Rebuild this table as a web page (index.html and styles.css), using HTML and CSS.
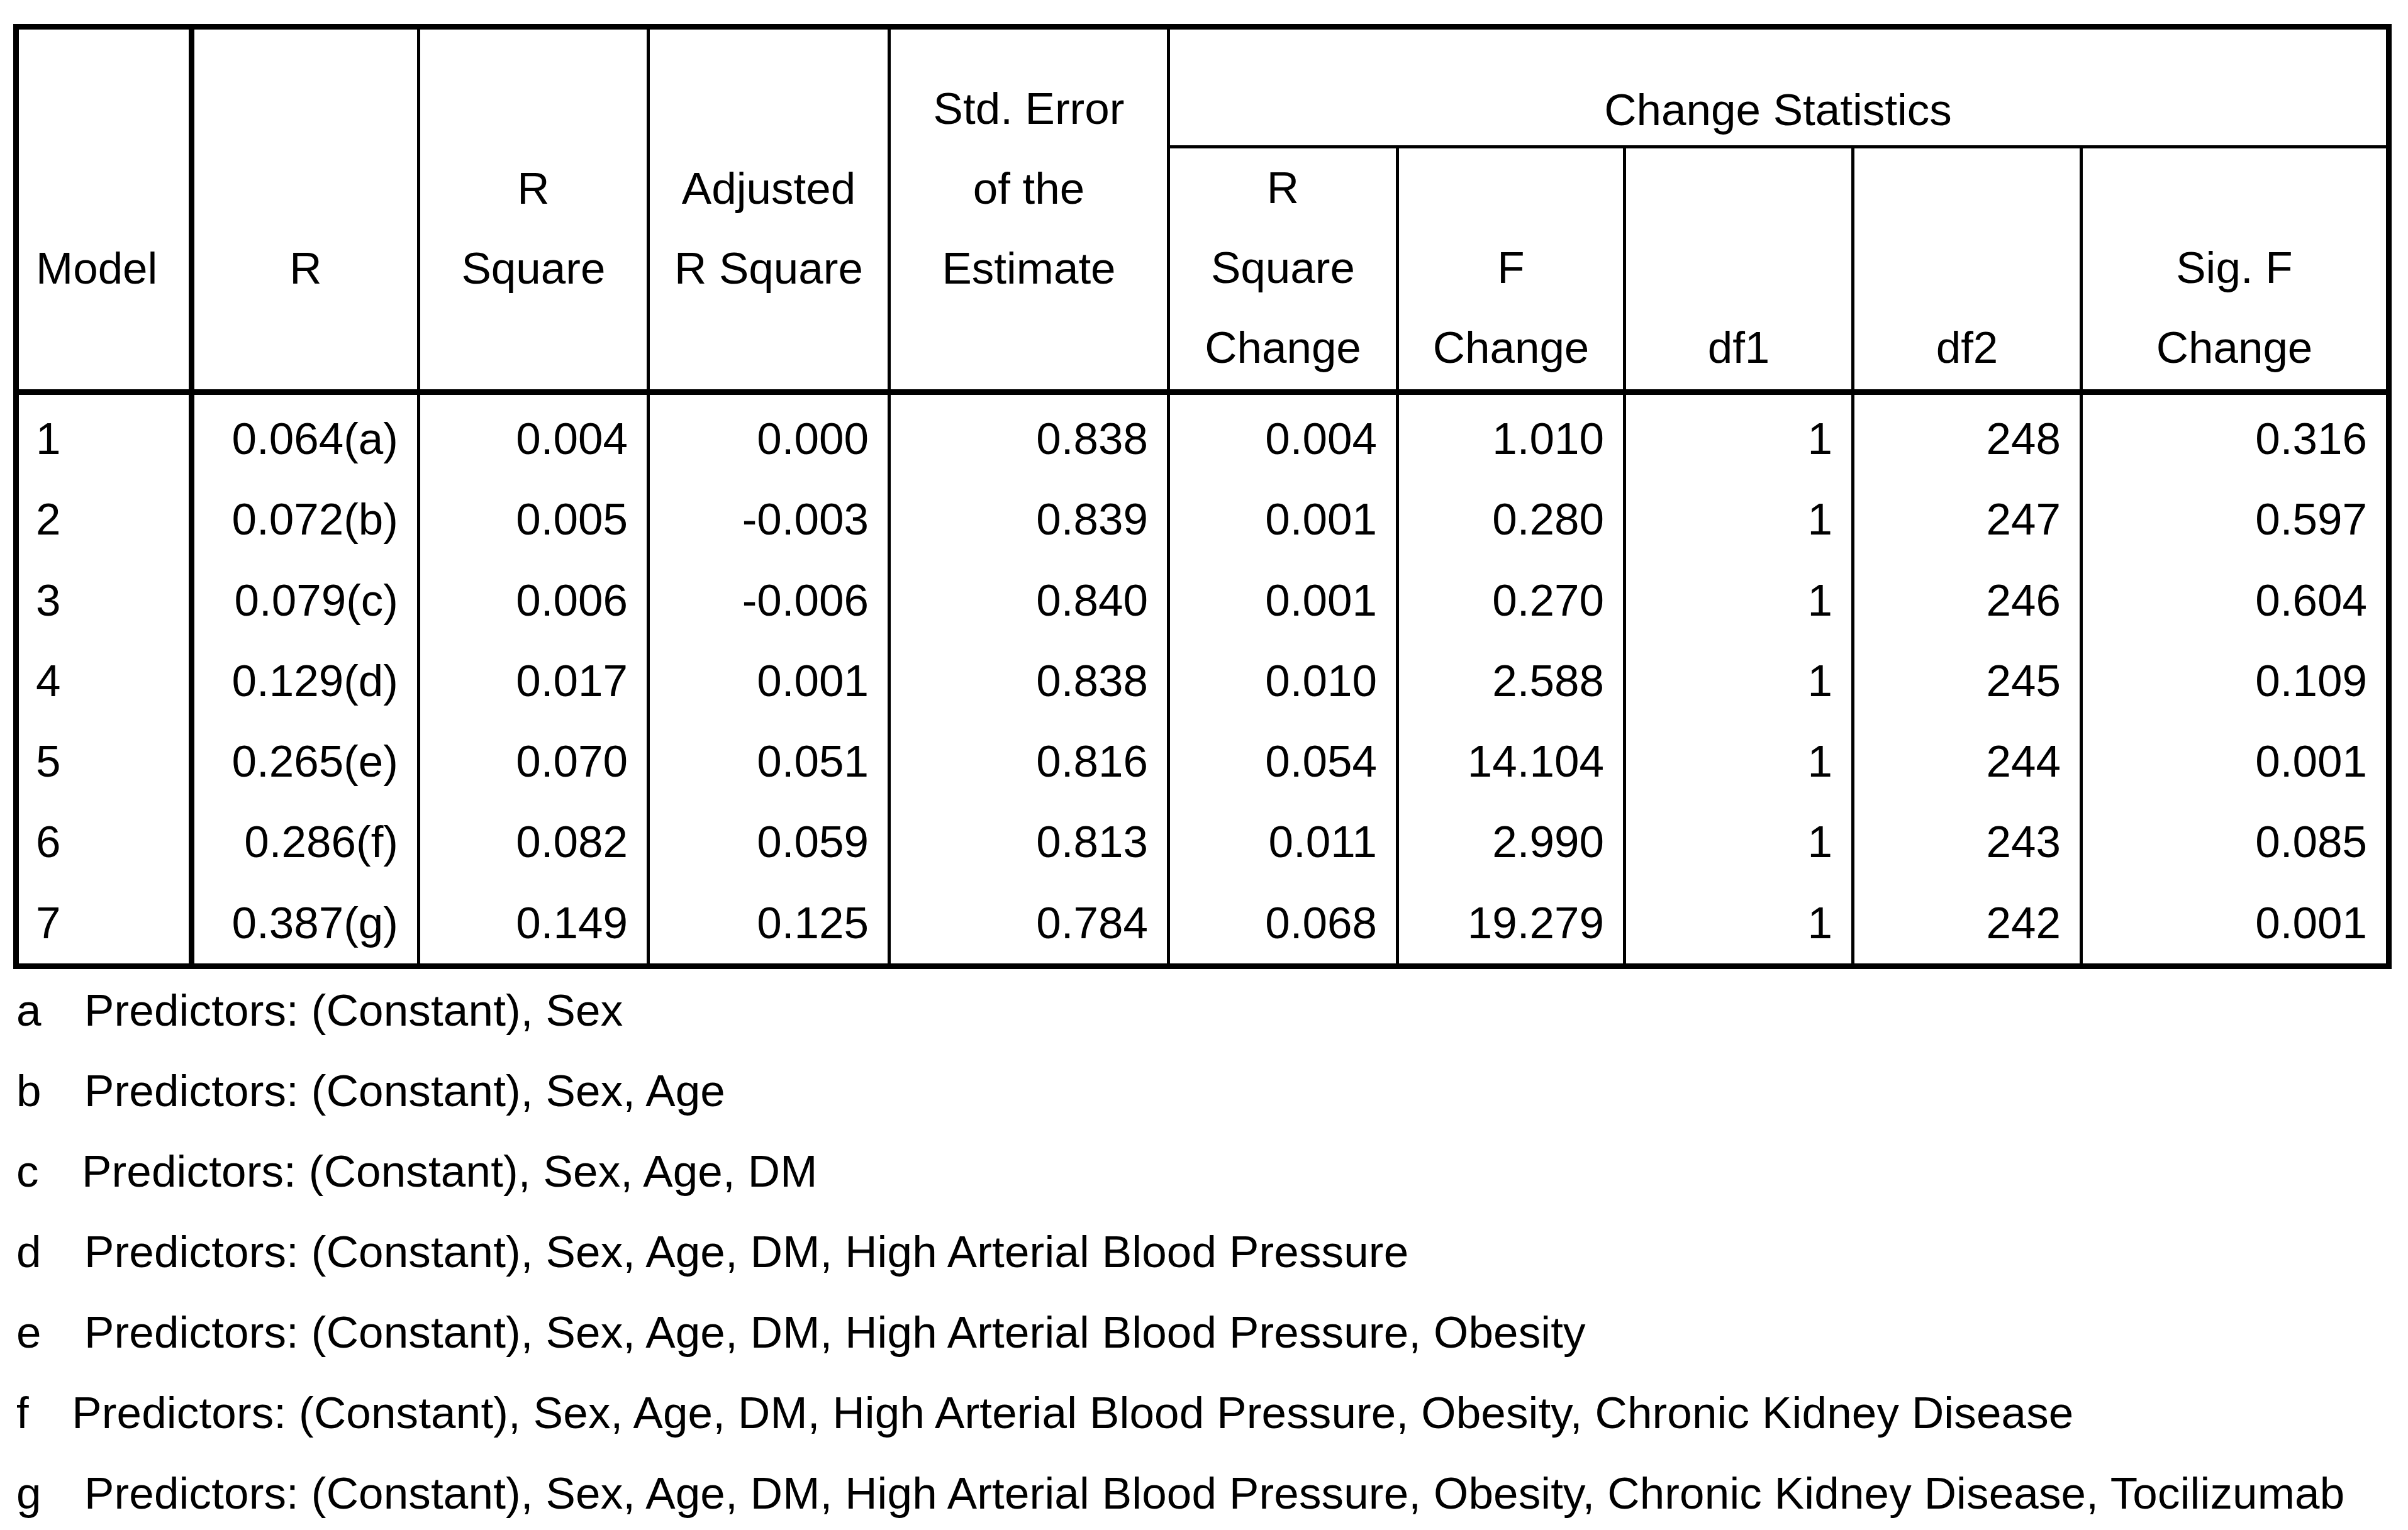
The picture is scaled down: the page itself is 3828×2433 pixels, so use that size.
FILE: index.html
```html
<!DOCTYPE html>
<html lang="en">
<head>
<meta charset="utf-8">
<title>Model Summary</title>
<link rel="stylesheet" href="styles.css">
</head>
<body>
<div class="page">
  <div class="table">
    <div class="hc rs model">Model</div>
    <div class="hc rs">R</div>
    <div class="hc rs">R<br>Square</div>
    <div class="hc rs">Adjusted<br>R Square</div>
    <div class="hc rs">Std. Error<br>of the<br>Estimate</div>
    <div class="hc group">Change Statistics</div>
    <div class="hc sub">R<br>Square<br>Change</div>
    <div class="hc sub">F<br>Change</div>
    <div class="hc sub">df1</div>
    <div class="hc sub">df2</div>
    <div class="hc sub last">Sig. F<br>Change</div>

    <div class="dc m r1">1</div><div class="dc r1">0.064(a)</div><div class="dc r1">0.004</div><div class="dc r1">0.000</div><div class="dc r1">0.838</div><div class="dc r1">0.004</div><div class="dc r1">1.010</div><div class="dc r1">1</div><div class="dc r1">248</div><div class="dc r1 last">0.316</div>
    <div class="dc m">2</div><div class="dc">0.072(b)</div><div class="dc">0.005</div><div class="dc">-0.003</div><div class="dc">0.839</div><div class="dc">0.001</div><div class="dc">0.280</div><div class="dc">1</div><div class="dc">247</div><div class="dc last">0.597</div>
    <div class="dc m">3</div><div class="dc">0.079(c)</div><div class="dc">0.006</div><div class="dc">-0.006</div><div class="dc">0.840</div><div class="dc">0.001</div><div class="dc">0.270</div><div class="dc">1</div><div class="dc">246</div><div class="dc last">0.604</div>
    <div class="dc m">4</div><div class="dc">0.129(d)</div><div class="dc">0.017</div><div class="dc">0.001</div><div class="dc">0.838</div><div class="dc">0.010</div><div class="dc">2.588</div><div class="dc">1</div><div class="dc">245</div><div class="dc last">0.109</div>
    <div class="dc m">5</div><div class="dc">0.265(e)</div><div class="dc">0.070</div><div class="dc">0.051</div><div class="dc">0.816</div><div class="dc">0.054</div><div class="dc">14.104</div><div class="dc">1</div><div class="dc">244</div><div class="dc last">0.001</div>
    <div class="dc m">6</div><div class="dc">0.286(f)</div><div class="dc">0.082</div><div class="dc">0.059</div><div class="dc">0.813</div><div class="dc">0.011</div><div class="dc">2.990</div><div class="dc">1</div><div class="dc">243</div><div class="dc last">0.085</div>
    <div class="dc m">7</div><div class="dc">0.387(g)</div><div class="dc">0.149</div><div class="dc">0.125</div><div class="dc">0.784</div><div class="dc">0.068</div><div class="dc">19.279</div><div class="dc">1</div><div class="dc">242</div><div class="dc last">0.001</div>
  </div>

  <div class="notes">
    <div class="note"><span class="key">a</span>Predictors: (Constant), Sex</div>
    <div class="note"><span class="key">b</span>Predictors: (Constant), Sex, Age</div>
    <div class="note"><span class="key">c</span>Predictors: (Constant), Sex, Age, DM</div>
    <div class="note"><span class="key">d</span>Predictors: (Constant), Sex, Age, DM, High Arterial Blood Pressure</div>
    <div class="note"><span class="key">e</span>Predictors: (Constant), Sex, Age, DM, High Arterial Blood Pressure, Obesity</div>
    <div class="note"><span class="key">f</span>Predictors: (Constant), Sex, Age, DM, High Arterial Blood Pressure, Obesity, Chronic Kidney Disease</div>
    <div class="note"><span class="key">g</span>Predictors: (Constant), Sex, Age, DM, High Arterial Blood Pressure, Obesity, Chronic Kidney Disease, Tocilizumab</div>
  </div>
</div>
</body>
</html>
```

FILE: styles.css
```css
* {
  box-sizing: border-box;
}

html, body {
  margin: 0;
  padding: 0;
  background: #ffffff;
}

body {
  font-family: "Liberation Sans", Arial, sans-serif;
  font-size: 71px;
  color: #000000;
}

.page {
  padding: 38px 0 0 21px;
}

.table {
  display: grid;
  width: 3781px;
  grid-template-columns: 279px 359px 365px 383px 444px 364px 361px 363px 363px 482px;
  grid-template-rows: 189px 392px 134.3px repeat(6, 128.3px);
  border: 9px solid #000;
}

.hc {
  display: flex;
  flex-direction: column;
  justify-content: flex-end;
  text-align: center;
  font-weight: normal;
  line-height: 127px;
  white-space: nowrap;
  border-right: 5px solid #000;
}

.hc.rs {
  grid-row: 1 / span 2;
  border-bottom: 9px solid #000;
  padding-bottom: 129px;
}

.hc.model {
  text-align: left;
  padding-left: 27px;
  border-right-width: 9px;
}

.hc.group {
  grid-column: 6 / span 5;
  justify-content: flex-start;
  line-height: 80px;
  padding-top: 88px;
  border-right: 0;
  border-bottom: 5px solid #000;
}

.hc.sub {
  border-bottom: 9px solid #000;
  padding-bottom: 3px;
}

.hc.last,
.dc.last {
  border-right: 0;
}

.dc {
  line-height: 128.3px;
  text-align: right;
  padding-right: 30px;
  white-space: nowrap;
  border-right: 5px solid #000;
}

.dc.m {
  text-align: left;
  padding-left: 27px;
  padding-right: 0;
  border-right-width: 9px;
}

.dc.r1 {
  padding-top: 6px;
}

.notes {
  margin-top: 2px;
  padding-left: 5px;
}

.note {
  line-height: 128px;
  white-space: nowrap;
  letter-spacing: 0.15px;
}

.key {
  display: inline-block;
  margin-right: 68.5px;
  letter-spacing: 0;
}
```
